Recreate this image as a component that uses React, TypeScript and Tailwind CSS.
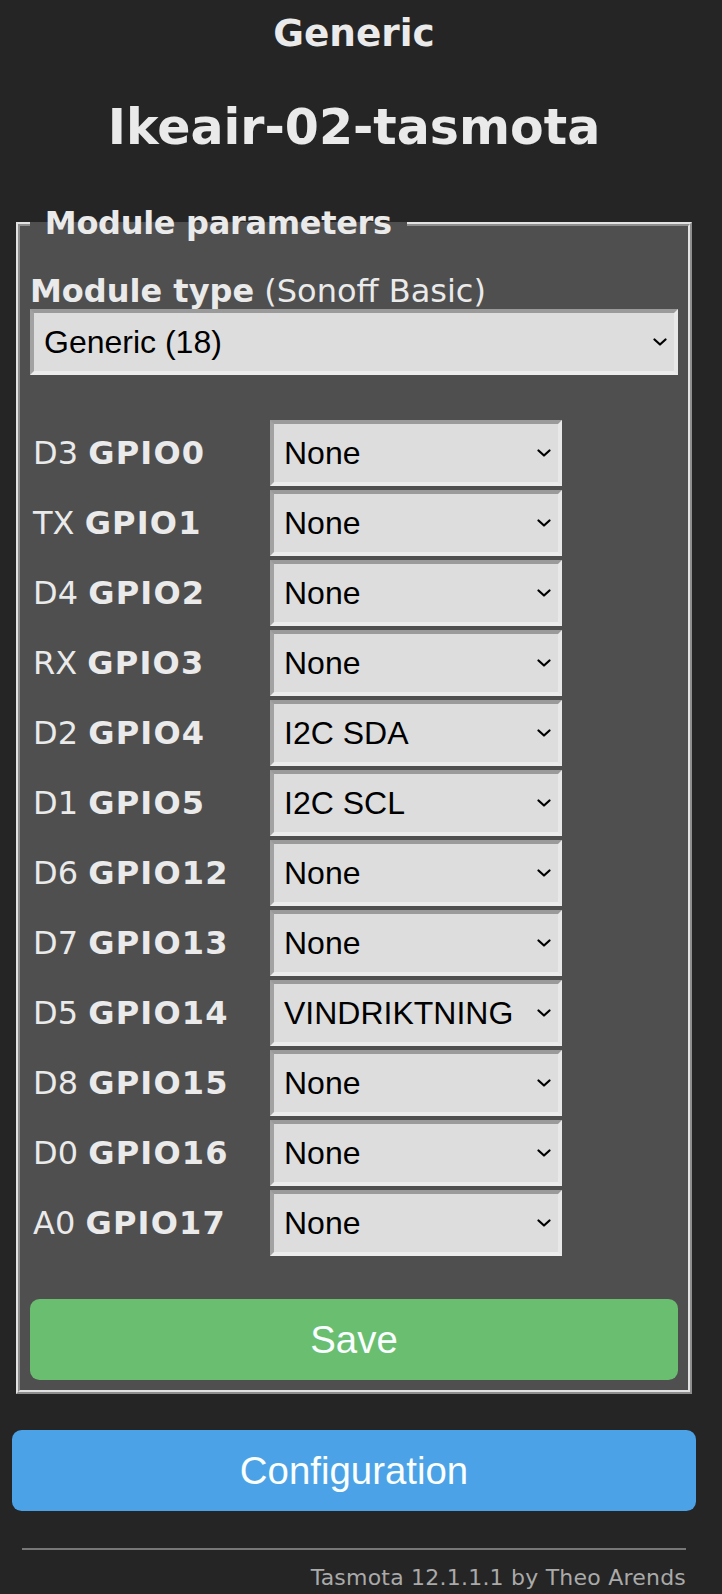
import clsx from "clsx";

const gpios: [string, string, string][] = [
  ["D3", "GPIO0", "None"],
  ["TX", "GPIO1", "None"],
  ["D4", "GPIO2", "None"],
  ["RX", "GPIO3", "None"],
  ["D2", "GPIO4", "I2C SDA"],
  ["D1", "GPIO5", "I2C SCL"],
  ["D6", "GPIO12", "None"],
  ["D7", "GPIO13", "None"],
  ["D5", "GPIO14", "VINDRIKTNING"],
  ["D8", "GPIO15", "None"],
  ["D0", "GPIO16", "None"],
  ["A0", "GPIO17", "None"],
];

const Chevron = () => (
  <svg
    width="14"
    height="8"
    viewBox="0 0 14 8"
    fill="none"
    stroke="#000"
    strokeWidth="2.2"
    strokeLinecap="round"
    strokeLinejoin="round"
  >
    <path d="M1.5 1.5 7 6.5 12.5 1.5" />
  </svg>
);

interface SelectBoxProps {
  value: string;
  className?: string;
}

const SelectBox = ({ value, className }: SelectBoxProps) => (
  <div
    className={clsx(
      "flex h-[66px] items-center justify-between border-4 border-t-[#9a9a9a] border-l-[#a2a2a2] border-b-[#ececec] border-r-[#e8e8e8] bg-[#dddddd] pl-[10px] pr-[7px] font-['Liberation_Sans',Arial,sans-serif] text-[32px] leading-[37px] text-black",
      className
    )}
  >
    <span>{value}</span>
    <Chevron />
  </div>
);

export default function App() {
  return (
    <div className="min-h-screen bg-[#252525] font-['DejaVu_Sans',Verdana,sans-serif] text-[#eaeaea]">
      <div className="ml-[12px] w-[684px]">
        <div className="pt-[11px] text-center font-bold">
          <h3 className="text-[37.4px] leading-[44px]">Generic</h3>
          <h2 className="mt-[44px] text-[49px] leading-[57px]">Ikeair-02-tasmota</h2>
        </div>

        <fieldset className="mx-[4px] mt-[49px] border-4 border-[#e2e2e2] bg-[#4f4f4f] px-[10px] pb-[10px] [border-style:ridge]">
          <legend className="px-[4px] text-[32px] font-bold leading-[37px] tracking-[-0.3px]">
            &nbsp;Module parameters&nbsp;
          </legend>

          <div className="mt-[31px] text-[32px] leading-[36px]">
            <b>Module type</b> (Sonoff Basic)
          </div>
          <SelectBox value="Generic (18)" />

          <div className="mt-[45px] flex flex-col gap-[4px]">
            {gpios.map(([pin, gpio, fn]) => (
              <div key={gpio} className="flex items-center pl-[3px]">
                <div className="w-[233px] text-[32px] leading-[37px]">
                  {pin} <b className="tracking-[1.2px]">{gpio}</b>
                </div>
                <SelectBox value={fn} className="ml-[4px] w-[292px]" />
              </div>
            ))}
          </div>

          <button className="mt-[43px] block h-[81px] w-full rounded-[9.6px] bg-[#6abe70] font-['Liberation_Sans',Arial,sans-serif] text-[38.4px] leading-[81px] text-[#faffff]">
            Save
          </button>
        </fieldset>

        <button className="mt-[36px] block h-[81px] w-full rounded-[9.6px] bg-[#4ca2e6] font-['Liberation_Sans',Arial,sans-serif] text-[38.4px] leading-[81px] text-[#faffff]">
          Configuration
        </button>

        <div className="px-[10px] text-right">
          <hr className="mt-[37px] border-t-2 border-[#777777]" />
          <div className="mt-[15px] text-[22px] leading-[25.6px] tracking-[0.22px] text-[#aaaaaa]">
            Tasmota 12.1.1.1 by Theo Arends
          </div>
        </div>
      </div>
    </div>
  );
}
